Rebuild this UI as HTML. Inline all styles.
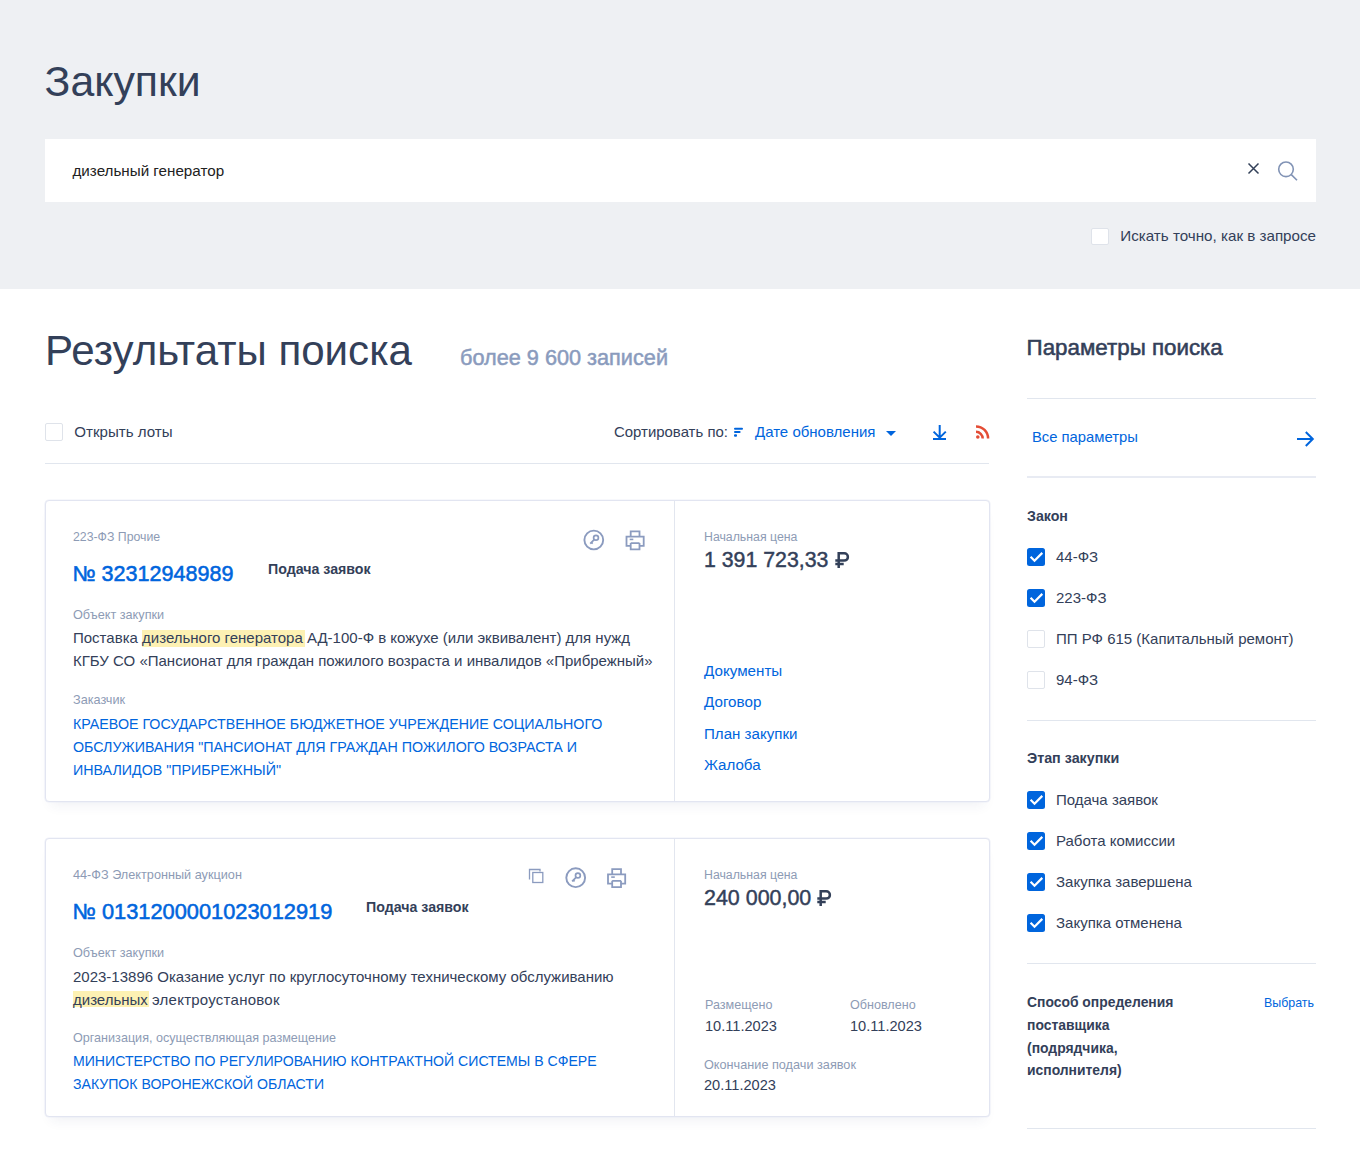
<!DOCTYPE html>
<html lang="ru"><head><meta charset="utf-8"><title>Закупки</title>
<style>
html,body{margin:0;padding:0;background:#fff;}
body{width:1360px;height:1153px;position:relative;overflow:hidden;font-family:"Liberation Sans",sans-serif;}
.t{position:absolute;white-space:nowrap;}
.r{position:absolute;display:block;}
</style></head><body>
<div class="r" style="left:0px;top:0px;width:1360px;height:289px;background:#eef0f3"></div>
<div class="t" style="left:44.60px;top:55.66px;font-size:42.8px;line-height:51px;color:#334059;">Закупки</div>
<div class="r" style="left:45px;top:139px;width:1271px;height:63px;background:#fff"></div>
<div class="t" style="left:72.50px;top:162.23px;font-size:15.2px;line-height:18px;color:#222;">дизельный генератор</div>
<svg class="r" style="left:1247px;top:162px;" width="13" height="13" viewBox="0 0 13 13"><path d="M1.5 1.5L11.5 11.5M11.5 1.5L1.5 11.5" stroke="#334059" stroke-width="1.5"/></svg>
<svg class="r" style="left:1276px;top:159px;" width="24" height="24" viewBox="0 0 24 24"><circle cx="10" cy="10.3" r="7.3" fill="none" stroke="#8193b5" stroke-width="1.6"/><path d="M15.3 15.6L21 21.3" stroke="#8193b5" stroke-width="1.6"/></svg>
<div class="r" style="left:1091px;top:228px;width:18px;height:17px;background:#fff;border:1px solid #dfe3ea;border-radius:2px;box-sizing:border-box"></div>
<div class="t" style="left:1120.30px;top:226.74px;font-size:15.18px;line-height:18px;color:#334059;">Искать точно, как в запросе</div>
<div class="t" style="left:45.00px;top:324.90px;font-size:42.1px;line-height:51px;color:#334059;">Результаты поиска</div>
<div class="t" style="left:460.00px;top:344.98px;font-size:21.7px;line-height:26px;color:#8a9bbd;-webkit-text-stroke:0.5px #8a9bbd;">более 9 600 записей</div>
<div class="t" style="left:1026.60px;top:333.75px;font-size:22.35px;line-height:27px;color:#334059;-webkit-text-stroke:0.55px #334059;">Параметры поиска</div>
<div class="r" style="left:45px;top:423px;width:18px;height:18px;background:#fff;border:1px solid #dfe3ea;border-radius:2px;box-sizing:border-box"></div>
<div class="t" style="left:74.30px;top:422.76px;font-size:15.1px;line-height:18px;color:#334059;">Открыть лоты</div>
<div class="t" style="left:614.00px;top:422.62px;font-size:14.95px;line-height:18px;color:#334059;">Сортировать по:</div>
<svg class="r" style="left:733px;top:427px;" width="11" height="11" viewBox="0 0 11 11"><rect x="1" y="0.7" width="9" height="2.1" rx="1" fill="#0065dd"/><rect x="1" y="4.1" width="6.6" height="2" rx="1" fill="#0065dd"/><rect x="1" y="7.2" width="3" height="2.6" rx="1" fill="#0065dd"/></svg>
<div class="t" style="left:755.00px;top:422.60px;font-size:15px;line-height:18px;color:#0065dd;">Дате обновления</div>
<svg class="r" style="left:885px;top:430px;" width="12" height="7" viewBox="0 0 12 7"><path d="M1 1h10l-5 5z" fill="#0065dd"/></svg>
<svg class="r" style="left:930px;top:422px;" width="18" height="20" viewBox="0 0 18 20"><path d="M9.7 3v13.5M3.6 9.6l6.1 6.1 6.1-6.1" fill="none" stroke="#0065dd" stroke-width="2"/><path d="M3 17h13" stroke="#0065dd" stroke-width="2"/></svg>
<svg class="r" style="left:974px;top:422px;" width="20" height="20" viewBox="0 0 20 20"><circle cx="3.8" cy="15" r="1.8" fill="#e44d35"/><path d="M2 9.8a6.7 6.7 0 0 1 6.7 6.7" fill="none" stroke="#e44d35" stroke-width="2.5"/><path d="M2 4.4a12.1 12.1 0 0 1 12.1 12.1" fill="none" stroke="#e44d35" stroke-width="2.5"/></svg>
<div class="r" style="left:45px;top:463px;width:944px;height:1px;background:#e1e6ee"></div>
<div class="r" style="left:45px;top:500px;width:945px;height:302px;background:#fff;border:1px solid #e2e5f1;border-radius:4px;box-sizing:border-box;box-shadow:0 0 0 0.6px rgba(225,229,243,0.55),0 9px 12px -6px rgba(40,50,110,0.075)"></div>
<div class="r" style="left:674px;top:501px;width:1px;height:300px;background:#e2e6ef"></div>
<svg class="r" style="left:580px;top:526px;" width="70" height="28" viewBox="0 0 70 28"><circle cx="13.8" cy="14" r="9.4" fill="none" stroke="#8b9bbf" stroke-width="1.9"/><circle cx="16.0" cy="11.8" r="2.4" fill="none" stroke="#8b9bbf" stroke-width="1.7"/><path d="M14.4 13.4L10.200000000000001 17.6M11.4 16.4l1.3 1.3" stroke="#8b9bbf" stroke-width="1.7" fill="none"/><path d="M50.7 10.7V5.4h8.8v5.3M50.7 17.1v6.3h8.8V17.1M50.7 19.9H46.5V10.7h17.2v9.2H59.5M50.7 17.1h8.8" fill="none" stroke="#8b9bbf" stroke-width="1.8"/><rect x="49.7" y="12.6" width="3.6" height="1.6" fill="#8b9bbf"/></svg>
<div class="t" style="left:73.00px;top:530.44px;font-size:12.3px;line-height:15px;color:#8d9bb5;">223-ФЗ Прочие</div>
<div class="t" style="left:72.50px;top:561.03px;font-size:21.55px;line-height:26px;color:#0065dd;-webkit-text-stroke:0.55px #0065dd;">№ 32312948989</div>
<div class="t" style="left:268.00px;top:561.08px;font-size:14.2px;line-height:17px;color:#334059;font-weight:bold;">Подача заявок</div>
<div class="t" style="left:73.00px;top:607.75px;font-size:12.7px;line-height:15px;color:#8d9bb5;">Объект закупки</div>
<div class="r" style="left:142px;top:630px;width:163px;height:17px;background:#fdf1b3"></div>
<div class="t" style="left:73.00px;top:626.90px;font-size:15px;line-height:22.8px;color:#334059;">Поставка <span>дизельного генератора</span> АД-100-Ф в кожухе (или эквивалент) для нужд<br>КГБУ СО «Пансионат для граждан пожилого возраста и инвалидов «Прибрежный»</div>
<div class="t" style="left:73.00px;top:692.75px;font-size:12.7px;line-height:15px;color:#8d9bb5;">Заказчик</div>
<div class="t" style="left:73.00px;top:712.56px;font-size:14.26px;line-height:23px;color:#0065dd;">КРАЕВОЕ ГОСУДАРСТВЕННОЕ БЮДЖЕТНОЕ УЧРЕЖДЕНИЕ СОЦИАЛЬНОГО<br>ОБСЛУЖИВАНИЯ "ПАНСИОНАТ ДЛЯ ГРАЖДАН ПОЖИЛОГО ВОЗРАСТА И<br>ИНВАЛИДОВ "ПРИБРЕЖНЫЙ"</div>
<div class="t" style="left:704.00px;top:530.14px;font-size:12.3px;line-height:15px;color:#8d9bb5;">Начальная цена</div>
<div class="t" style="left:704.00px;top:547.32px;font-size:21.3px;line-height:26px;color:#334059;-webkit-text-stroke:0.45px #334059;">1 391 723,33</div>
<svg class="r" style="left:834px;top:551px;" width="16" height="17" viewBox="0 0 16 17"><path d="M4.7 16.9V2.3H10.25A3.65 3.65 0 0 1 10.25 9.6H1.3M1.3 12.9H9.7" fill="none" stroke="#334059" stroke-width="2.5"/></svg>
<div class="t" style="left:704.00px;top:661.63px;font-size:15.2px;line-height:18px;color:#0065dd;">Документы</div>
<div class="t" style="left:704.00px;top:693.13px;font-size:15.2px;line-height:18px;color:#0065dd;">Договор</div>
<div class="t" style="left:704.00px;top:724.76px;font-size:15.1px;line-height:18px;color:#0065dd;">План закупки</div>
<div class="t" style="left:704.00px;top:756.36px;font-size:15.1px;line-height:18px;color:#0065dd;">Жалоба</div>
<div class="r" style="left:45px;top:838px;width:945px;height:279px;background:#fff;border:1px solid #e2e5f1;border-radius:4px;box-sizing:border-box;box-shadow:0 0 0 0.6px rgba(225,229,243,0.55),0 9px 12px -6px rgba(40,50,110,0.075)"></div>
<div class="r" style="left:674px;top:839px;width:1px;height:277px;background:#e2e6ef"></div>
<svg class="r" style="left:520px;top:862px;" width="110" height="30" viewBox="0 0 110 30"><path d="M9.5 17.5V7.5h10.5v2" fill="none" stroke="#8b9bbf" stroke-width="1.3"/><rect x="12.8" y="10.5" width="10" height="10" fill="none" stroke="#8b9bbf" stroke-width="1.3"/><circle cx="55.7" cy="15.7" r="9.4" fill="none" stroke="#8b9bbf" stroke-width="1.9"/><circle cx="57.900000000000006" cy="13.5" r="2.4" fill="none" stroke="#8b9bbf" stroke-width="1.7"/><path d="M56.300000000000004 15.1L52.1 19.3M53.300000000000004 18.099999999999998l1.3 1.3" stroke="#8b9bbf" stroke-width="1.7" fill="none"/><path d="M92.2 12.4V7.1000000000000005h8.8v5.3M92.2 18.8v6.3h8.8V18.8M92.2 21.6H88V12.4h17.2v9.2H101M92.2 18.8h8.8" fill="none" stroke="#8b9bbf" stroke-width="1.8"/><rect x="91.2" y="14.3" width="3.6" height="1.6" fill="#8b9bbf"/></svg>
<div class="t" style="left:73.00px;top:868.00px;font-size:12.7px;line-height:15px;color:#8d9bb5;">44-ФЗ Электронный аукцион</div>
<div class="t" style="left:72.50px;top:899.04px;font-size:21.8px;line-height:26px;color:#0065dd;-webkit-text-stroke:0.55px #0065dd;">№ 0131200001023012919</div>
<div class="t" style="left:366.00px;top:899.38px;font-size:14.2px;line-height:17px;color:#334059;font-weight:bold;">Подача заявок</div>
<div class="t" style="left:73.00px;top:945.50px;font-size:12.7px;line-height:15px;color:#8d9bb5;">Объект закупки</div>
<div class="r" style="left:73px;top:991px;width:76px;height:16px;background:#fdf1b3"></div>
<div class="t" style="left:73.00px;top:965.30px;font-size:15px;line-height:23px;color:#334059;">2023-13896 Оказание услуг по круглосуточному техническому обслуживанию<br>дизельных <span style="letter-spacing:0.25px">электроустановок</span></div>
<div class="t" style="left:73.00px;top:1031.03px;font-size:12.6px;line-height:15px;color:#8d9bb5;">Организация, осуществляющая размещение</div>
<div class="t" style="left:73.00px;top:1050.11px;font-size:14.1px;line-height:23px;color:#0065dd;">МИНИСТЕРСТВО ПО РЕГУЛИРОВАНИЮ КОНТРАКТНОЙ СИСТЕМЫ В СФЕРЕ<br>ЗАКУПОК ВОРОНЕЖСКОЙ ОБЛАСТИ</div>
<div class="t" style="left:704.00px;top:867.64px;font-size:12.3px;line-height:15px;color:#8d9bb5;">Начальная цена</div>
<div class="t" style="left:704.00px;top:884.76px;font-size:21.45px;line-height:26px;color:#334059;-webkit-text-stroke:0.45px #334059;">240 000,00</div>
<svg class="r" style="left:816.3px;top:889px;" width="16" height="17" viewBox="0 0 16 17"><path d="M4.7 16.9V2.3H10.25A3.65 3.65 0 0 1 10.25 9.6H1.3M1.3 12.9H9.7" fill="none" stroke="#334059" stroke-width="2.5"/></svg>
<div class="t" style="left:705.00px;top:998.43px;font-size:12.6px;line-height:15px;color:#8d9bb5;">Размещено</div>
<div class="t" style="left:705.00px;top:1017.44px;font-size:14.6px;line-height:18px;color:#334059;">10.11.2023</div>
<div class="t" style="left:850.00px;top:998.43px;font-size:12.6px;line-height:15px;color:#8d9bb5;">Обновлено</div>
<div class="t" style="left:850.00px;top:1017.44px;font-size:14.6px;line-height:18px;color:#334059;">10.11.2023</div>
<div class="t" style="left:704.00px;top:1057.50px;font-size:12.7px;line-height:15px;color:#8d9bb5;">Окончание подачи заявок</div>
<div class="t" style="left:704.00px;top:1076.14px;font-size:14.6px;line-height:18px;color:#334059;">20.11.2023</div>
<div class="r" style="left:1027px;top:398px;width:289px;height:1px;background:#e1e6ee"></div>
<div class="t" style="left:1032.00px;top:428.37px;font-size:14.8px;line-height:18px;color:#0065dd;">Все параметры</div>
<svg class="r" style="left:1294px;top:430px;" width="22" height="18" viewBox="0 0 22 18"><path d="M3 9h15.6M11.8 2L18.8 9l-7 7" fill="none" stroke="#0065dd" stroke-width="2"/></svg>
<div class="r" style="left:1027px;top:476px;width:289px;height:2px;background:#e8ebf3"></div>
<div class="t" style="left:1027.00px;top:508.08px;font-size:14.2px;line-height:17px;color:#334059;font-weight:bold;">Закон</div>
<div class="r" style="left:1027px;top:548px;width:18px;height:18px;background:#0065dd;border-radius:2.5px"></div>
<svg class="r" style="left:1027px;top:548px;" width="18" height="18" viewBox="0 0 18 18"><path d="M3.6 8.8l3.9 3.9 7.8-7.8" fill="none" stroke="#fff" stroke-width="2.2"/></svg>
<div class="t" style="left:1056.00px;top:547.60px;font-size:15px;line-height:18px;color:#334059;">44-ФЗ</div>
<div class="r" style="left:1027px;top:589px;width:18px;height:18px;background:#0065dd;border-radius:2.5px"></div>
<svg class="r" style="left:1027px;top:589px;" width="18" height="18" viewBox="0 0 18 18"><path d="M3.6 8.8l3.9 3.9 7.8-7.8" fill="none" stroke="#fff" stroke-width="2.2"/></svg>
<div class="t" style="left:1056.00px;top:588.60px;font-size:15px;line-height:18px;color:#334059;">223-ФЗ</div>
<div class="r" style="left:1027px;top:630px;width:18px;height:18px;background:#fff;border:1px solid #dfe3ea;border-radius:2px;box-sizing:border-box"></div>
<div class="t" style="left:1056.00px;top:629.60px;font-size:15px;line-height:18px;color:#334059;">ПП РФ 615 (Капитальный ремонт)</div>
<div class="r" style="left:1027px;top:671px;width:18px;height:18px;background:#fff;border:1px solid #dfe3ea;border-radius:2px;box-sizing:border-box"></div>
<div class="t" style="left:1056.00px;top:670.60px;font-size:15px;line-height:18px;color:#334059;">94-ФЗ</div>
<div class="r" style="left:1027px;top:720px;width:289px;height:1px;background:#e1e6ee"></div>
<div class="t" style="left:1027.00px;top:750.34px;font-size:14.3px;line-height:17px;color:#334059;font-weight:bold;">Этап закупки</div>
<div class="r" style="left:1027px;top:791px;width:18px;height:18px;background:#0065dd;border-radius:2.5px"></div>
<svg class="r" style="left:1027px;top:791px;" width="18" height="18" viewBox="0 0 18 18"><path d="M3.6 8.8l3.9 3.9 7.8-7.8" fill="none" stroke="#fff" stroke-width="2.2"/></svg>
<div class="t" style="left:1056.00px;top:791.00px;font-size:15px;line-height:18px;color:#334059;">Подача заявок</div>
<div class="r" style="left:1027px;top:832px;width:18px;height:18px;background:#0065dd;border-radius:2.5px"></div>
<svg class="r" style="left:1027px;top:832px;" width="18" height="18" viewBox="0 0 18 18"><path d="M3.6 8.8l3.9 3.9 7.8-7.8" fill="none" stroke="#fff" stroke-width="2.2"/></svg>
<div class="t" style="left:1056.00px;top:832.00px;font-size:15px;line-height:18px;color:#334059;">Работа комиссии</div>
<div class="r" style="left:1027px;top:873px;width:18px;height:18px;background:#0065dd;border-radius:2.5px"></div>
<svg class="r" style="left:1027px;top:873px;" width="18" height="18" viewBox="0 0 18 18"><path d="M3.6 8.8l3.9 3.9 7.8-7.8" fill="none" stroke="#fff" stroke-width="2.2"/></svg>
<div class="t" style="left:1056.00px;top:873.00px;font-size:15px;line-height:18px;color:#334059;">Закупка завершена</div>
<div class="r" style="left:1027px;top:914px;width:18px;height:18px;background:#0065dd;border-radius:2.5px"></div>
<svg class="r" style="left:1027px;top:914px;" width="18" height="18" viewBox="0 0 18 18"><path d="M3.6 8.8l3.9 3.9 7.8-7.8" fill="none" stroke="#fff" stroke-width="2.2"/></svg>
<div class="t" style="left:1056.00px;top:914.00px;font-size:15px;line-height:18px;color:#334059;">Закупка отменена</div>
<div class="r" style="left:1027px;top:963px;width:289px;height:1px;background:#e1e6ee"></div>
<div class="t" style="left:1027.00px;top:991.08px;font-size:13.9px;line-height:22.8px;color:#334059;font-weight:bold;">Способ определения<br>поставщика<br>(подрядчика,<br>исполнителя)</div>
<div class="t" style="left:1264.00px;top:995.50px;font-size:12.4px;line-height:15px;color:#0065dd;">Выбрать</div>
<div class="r" style="left:1027px;top:1128px;width:289px;height:1px;background:#e1e6ee"></div>
</body></html>
